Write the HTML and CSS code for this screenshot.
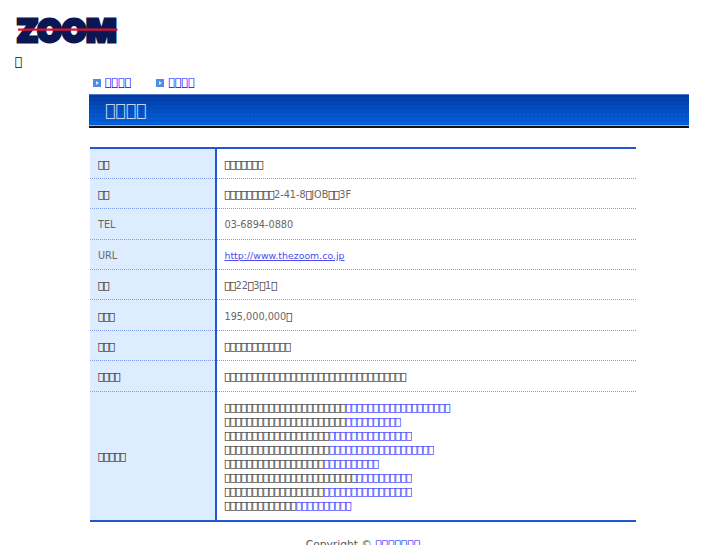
FILE: index.html
```html
<!DOCTYPE html>
<html lang="ja">
<head>
<meta charset="UTF-8">
<meta name="viewport" content="width=device-width, initial-scale=1.0">
<title>ZOOM</title>
<link rel="stylesheet" href="styles.css">
</head>
<body>
<div class="logo">
    <svg width="104" height="27" viewBox="0 0 104 27">
        <text x="1.5" y="25" textLength="100" lengthAdjust="spacingAndGlyphs" class="logo-text">ZOOM</text>
        <rect x="3" y="11.5" width="99.5" height="2.2" fill="#e0102c"/>
    </svg>
</div>
<div class="tagline">&#xE000;</div>

<div class="content">
    <div class="subnav">
        <a href="#"><svg class="arrow" width="8" height="8" viewBox="0 0 8 8"><rect width="8" height="8" fill="#4f8ae6"/><path d="M3 2 L6 4 L3 6 Z" fill="#dbe8fb"/></svg><span>&#xE000;&#xE000;&#xE000;&#xE000;</span></a>
        <a href="#"><svg class="arrow" width="8" height="8" viewBox="0 0 8 8"><rect width="8" height="8" fill="#4f8ae6"/><path d="M3 2 L6 4 L3 6 Z" fill="#dbe8fb"/></svg><span>&#xE000;&#xE000;&#xE000;&#xE000;</span></a>
    </div>
    <h1 class="page-title">&#xE000;&#xE000;&#xE000;&#xE000;</h1>

    <div class="company-wrap">
    <table class="company">
        <tr><th>&#xE000;&#xE000;</th><td>&#xE000;&#xE000;&#xE000;&#xE000;&#xE000;&#xE000;&#xE000;</td></tr>
        <tr><th>&#xE000;&#xE000;</th><td>&#xE000;&#xE000;&#xE000;&#xE000;&#xE000;&#xE000;&#xE000;&#xE000;&#xE000;<span class="lat">2-41-8</span>&#xE000;<span class="lat">JOB</span>&#xE000;&#xE000;<span class="lat">3F</span></td></tr>
        <tr><th><span class="lat">TEL</span></th><td><span class="lat">03-6894-0880</span></td></tr>
        <tr><th><span class="lat">URL</span></th><td><a href="#" class="lat url">http://www.thezoom.co.jp</a></td></tr>
        <tr><th>&#xE000;&#xE000;</th><td>&#xE000;&#xE000;<span class="lat">22</span>&#xE000;<span class="lat">3</span>&#xE000;<span class="lat">1</span>&#xE000;</td></tr>
        <tr><th>&#xE000;&#xE000;&#xE000;</th><td><span class="lat">195,000,000</span>&#xE000;</td></tr>
        <tr><th>&#xE000;&#xE000;&#xE000;</th><td>&#xE000;&#xE000;&#xE000;&#xE000;&#xE000;&#xE000;&#xE000;&#xE000;&#xE000;&#xE000;&#xE000;&#xE000;</td></tr>
        <tr><th>&#xE000;&#xE000;&#xE000;&#xE000;</th><td>&#xE000;&#xE000;&#xE000;&#xE000;&#xE000;&#xE000;&#xE000;&#xE000;&#xE000;&#xE000;&#xE000;&#xE000;&#xE000;&#xE000;&#xE000;&#xE000;&#xE000;&#xE000;&#xE000;&#xE000;&#xE000;&#xE000;&#xE000;&#xE000;&#xE000;&#xE000;&#xE000;&#xE000;&#xE000;&#xE000;&#xE000;&#xE000;&#xE000;</td></tr>
        <tr class="last">
            <th>&#xE000;&#xE000;&#xE000;&#xE000;&#xE000;</th>
            <td>
                <div>&#xE000;&#xE000;&#xE000;&#xE000;&#xE000;&#xE000;&#xE000;&#xE000;&#xE000;&#xE000;&#xE000;&#xE000;&#xE000;&#xE000;&#xE000;&#xE000;&#xE000;&#xE000;&#xE000;&#xE000;&#xE000;&#xE000;<a href="#">&#xE000;&#xE000;&#xE000;&#xE000;&#xE000;&#xE000;&#xE000;&#xE000;&#xE000;&#xE000;&#xE000;&#xE000;&#xE000;&#xE000;&#xE000;&#xE000;&#xE000;&#xE000;&#xE000;</a></div>
                <div>&#xE000;&#xE000;&#xE000;&#xE000;&#xE000;&#xE000;&#xE000;&#xE000;&#xE000;&#xE000;&#xE000;&#xE000;&#xE000;&#xE000;&#xE000;&#xE000;&#xE000;&#xE000;&#xE000;&#xE000;&#xE000;&#xE000;<a href="#">&#xE000;&#xE000;&#xE000;&#xE000;&#xE000;&#xE000;&#xE000;&#xE000;&#xE000;&#xE000;</a></div>
                <div>&#xE000;&#xE000;&#xE000;&#xE000;&#xE000;&#xE000;&#xE000;&#xE000;&#xE000;&#xE000;&#xE000;&#xE000;&#xE000;&#xE000;&#xE000;&#xE000;&#xE000;&#xE000;&#xE000;<a href="#">&#xE000;&#xE000;&#xE000;&#xE000;&#xE000;&#xE000;&#xE000;&#xE000;&#xE000;&#xE000;&#xE000;&#xE000;&#xE000;&#xE000;&#xE000;</a></div>
                <div>&#xE000;&#xE000;&#xE000;&#xE000;&#xE000;&#xE000;&#xE000;&#xE000;&#xE000;&#xE000;&#xE000;&#xE000;&#xE000;&#xE000;&#xE000;&#xE000;&#xE000;&#xE000;&#xE000;<a href="#">&#xE000;&#xE000;&#xE000;&#xE000;&#xE000;&#xE000;&#xE000;&#xE000;&#xE000;&#xE000;&#xE000;&#xE000;&#xE000;&#xE000;&#xE000;&#xE000;&#xE000;&#xE000;&#xE000;</a></div>
                <div>&#xE000;&#xE000;&#xE000;&#xE000;&#xE000;&#xE000;&#xE000;&#xE000;&#xE000;&#xE000;&#xE000;&#xE000;&#xE000;&#xE000;&#xE000;&#xE000;&#xE000;&#xE000;<a href="#">&#xE000;&#xE000;&#xE000;&#xE000;&#xE000;&#xE000;&#xE000;&#xE000;&#xE000;&#xE000;</a></div>
                <div>&#xE000;&#xE000;&#xE000;&#xE000;&#xE000;&#xE000;&#xE000;&#xE000;&#xE000;&#xE000;&#xE000;&#xE000;&#xE000;&#xE000;&#xE000;&#xE000;&#xE000;&#xE000;&#xE000;&#xE000;&#xE000;&#xE000;&#xE000;&#xE000;<a href="#">&#xE000;&#xE000;&#xE000;&#xE000;&#xE000;&#xE000;&#xE000;&#xE000;&#xE000;&#xE000;</a></div>
                <div>&#xE000;&#xE000;&#xE000;&#xE000;&#xE000;&#xE000;&#xE000;&#xE000;&#xE000;&#xE000;&#xE000;&#xE000;&#xE000;&#xE000;&#xE000;&#xE000;&#xE000;&#xE000;<a href="#">&#xE000;&#xE000;&#xE000;&#xE000;&#xE000;&#xE000;&#xE000;&#xE000;&#xE000;&#xE000;&#xE000;&#xE000;&#xE000;&#xE000;&#xE000;&#xE000;</a></div>
                <div>&#xE000;&#xE000;&#xE000;&#xE000;&#xE000;&#xE000;&#xE000;&#xE000;&#xE000;&#xE000;&#xE000;&#xE000;&#xE000;<a href="#">&#xE000;&#xE000;&#xE000;&#xE000;&#xE000;&#xE000;&#xE000;&#xE000;&#xE000;&#xE000;</a></div>
            </td>
        </tr>
    </table>

    <div class="copyright">Copyright &copy; <a href="#">&#xE000;&#xE000;&#xE000;&#xE000;&#xE000;&#xE000;&#xE000;</a></div>
    </div>
</div>
</body>
</html>
```

FILE: styles.css
```css
html {
    height: 545px;
    overflow: hidden;
    background-color: #ffffff;
}
body {
    font-family: "DejaVu Sans", sans-serif;
    font-size: 10px;
    letter-spacing: -0.5px;
    color: #000000;
    margin: 0;
    padding: 0;
    height: 545px;
    overflow: hidden;
    opacity: 0.99;
}
.logo {
    padding: 17px 0 0 15px;
    height: 28px;
}
.logo svg {
    display: block;
}
.logo-text {
    font-family: "Inter", sans-serif;
    font-weight: 900;
    font-size: 32px;
    letter-spacing: 0;
    fill: #0a1450;
    stroke: #0a1450;
    stroke-width: 3px;
}
.tagline {
    margin: 9px 0 0 15px;
    font-size: 12px;
    letter-spacing: 0;
    line-height: 16px;
}
.content {
    margin: 0 38px 0 89px;
}
.subnav {
    display: flex;
    gap: 25px;
    padding: 5px 0 0 4px;
    height: 24px;
    box-sizing: border-box;
    font-size: 11px;
    letter-spacing: 0;
}
.subnav a {
    display: flex;
    align-items: center;
    gap: 4px;
    height: 15px;
    color: #0000ff;
}
.arrow {
    display: block;
    flex: none;
}
.page-title {
    margin: 0;
    height: 30px;
    line-height: 31px;
    padding-left: 16px;
    font-size: 17.2px;
    letter-spacing: 0;
    font-weight: normal;
    color: #c3d3f2;
    background-color: #0050c8;
    background-image:
        repeating-linear-gradient(90deg, rgba(0, 0, 60, 0.07) 0, rgba(0, 0, 60, 0.07) 1px, transparent 1px, transparent 4px),
        repeating-linear-gradient(0deg, rgba(0, 0, 60, 0.07) 0, rgba(0, 0, 60, 0.07) 1px, transparent 1px, transparent 4px),
        linear-gradient(#003ca6, #0062e4);
    border-top: 1px solid #4a76c8;
    border-bottom: 1px solid #8fb0ee;
    box-shadow: 0 2px 0 #111111;
}
.company-wrap {
    width: 546px;
    margin: 21px 0 0 1px;
}
.company {
    width: 546px;
    border-collapse: collapse;
    border-top: 2px solid #2154d4;
    border-bottom: 2px solid #2154d4;
    line-height: 14px;
}
.company th {
    width: 125.5px;
    height: 30.4px;
    padding: 3px 8px 0;
    box-sizing: border-box;
    text-align: left;
    font-weight: normal;
    background-color: #ddecff;
    border-right: 2px solid #2154d4;
    border-bottom: 1px dotted #7d9cf0;
}
.company td {
    height: 30.4px;
    padding: 3px 8px 0;
    box-sizing: border-box;
    border-bottom: 1px dotted #7d9cf0;
}
.company td a {
    color: #0000ff;
}
.lat {
    font-size: 9.7px;
    letter-spacing: 0;
    color: #666666;
}
.company td a.url {
    font-size: 9.4px;
    color: #4a4af0;
}
.company .last th,
.company .last td {
    border-bottom: none;
}
.company .last td {
    padding: 9px 8px 7px;
}
.copyright {
    margin-top: 16px;
    text-align: center;
    font-size: 10.7px;
    letter-spacing: 0;
    color: #555555;
}
.copyright a {
    color: #0000ff;
}
```
